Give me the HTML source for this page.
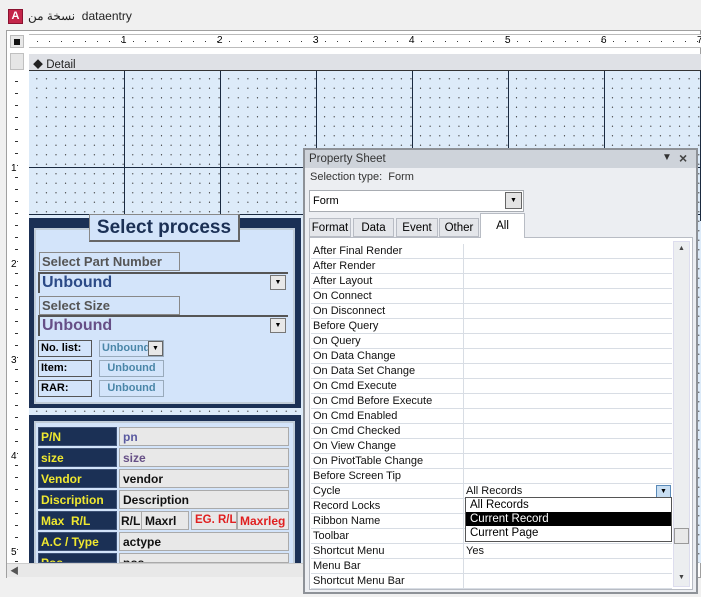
<!DOCTYPE html>
<html><head><meta charset="utf-8"><style>
*{margin:0;padding:0;box-sizing:border-box}
body{width:701px;height:597px;overflow:hidden;background:#f0f0f0;font-family:"Liberation Sans","Noto Sans CJK SC",sans-serif;position:relative;font-size:11px}
.a{position:absolute}
.grid{background-color:#ddebf9;background-image:radial-gradient(circle,#444 0.5px,transparent 0.8px);background-size:9.6px 9.5px;background-position:3px 3px}
.vl{position:absolute;top:71px;height:150px;width:1px;background:#1a2a40}
.lbl{position:absolute;left:38px;width:79px;height:19px;background:#1b3055;color:#f0e830;font-weight:bold;font-size:12px;padding:2px 2px;border:1px solid #3d5175;white-space:nowrap}
.val{position:absolute;left:119px;width:170px;height:19px;background:#e8e8e8;border:1px solid #aaa;font-weight:bold;font-size:12px;padding:2px 3px;color:#111;white-space:nowrap;overflow:hidden}
.row{position:absolute;left:311px;width:361px;height:15px;border-bottom:1px solid #d8dde4;font-size:11px;color:#111;background:#fff}
.row span{position:absolute;left:2px;top:1px}
.row i{position:absolute;left:152px;top:0;width:1px;height:15px;background:#d8dde4}
.row b{position:absolute;left:155px;top:1px;font-weight:normal}
.tab{position:absolute;top:218px;height:19px;background:#e4e6ea;border:1px solid #b8bcc4;font-size:11.5px;text-align:center;padding-top:3px}
</style></head><body>
<div class="a" style="left:8px;top:9px;width:15px;height:15px;background:#c4264a;border:1px solid #8a1230;color:#fff;font-weight:bold;font-size:11px;text-align:center;line-height:13px">A</div>
<div class="a" style="left:28px;top:9px;font-size:12px;color:#222">نسخة من&nbsp; dataentry</div>
<div class="a" style="left:6px;top:30px;width:695px;height:548px;border:1px solid #a0a0a0;background:#fff"></div>
<div class="a" style="left:10px;top:35px;width:14px;height:13px;background:#e8e8e8;border:1px solid #bbb"><div class="a" style="left:3px;top:3px;width:6px;height:6px;background:#111"></div></div>
<div class="a" style="left:29px;top:34px;width:672px;height:14px;background:#fff;border-top:1px solid #bbb;border-bottom:1px solid #bbb;font-size:10px">
<span class="a" style="left:92px;top:0">1</span><span class="a" style="left:188px;top:0">2</span><span class="a" style="left:284px;top:0">3</span><span class="a" style="left:380px;top:0">4</span><span class="a" style="left:476px;top:0">5</span><span class="a" style="left:572px;top:0">6</span><span class="a" style="left:668px;top:0">7</span>
<div class="a" style="left:0;top:6px;width:672px;height:1px;background-image:linear-gradient(90deg,#333 1px,transparent 1px);background-size:12px 1px;background-position:8px 0"></div>
</div>
<div class="a" style="left:10px;top:53px;width:14px;height:17px;background:#e6e6e6;border:1px solid #c0c0c0"></div>
<div class="a" style="left:10px;top:71px;width:14px;height:492px;background:#fff;font-size:10px">
<div class="a" style="left:5px;top:0;width:3px;height:492px;background-image:linear-gradient(#333 1px,transparent 1px);background-size:3px 12px;background-position:0 10px"></div>
<span class="a" style="left:1px;top:92px;background:#fff">1</span><span class="a" style="left:1px;top:188px;background:#fff">2</span><span class="a" style="left:1px;top:284px;background:#fff">3</span><span class="a" style="left:1px;top:380px;background:#fff">4</span><span class="a" style="left:1px;top:476px;background:#fff">5</span>
</div>
<div class="a" style="left:29px;top:54px;width:672px;height:17px;background:#dfe1e6;border-bottom:1px solid #333;font-size:11.5px;padding:2px 0 0 4px;color:#222"><span style="font-size:10px">◆</span> Detail</div>
<div class="a grid" style="left:29px;top:71px;width:672px;height:492px"></div>
<div class="vl" style="left:124px"></div><div class="vl" style="left:220px"></div><div class="vl" style="left:316px"></div><div class="vl" style="left:412px"></div><div class="vl" style="left:508px"></div><div class="vl" style="left:604px"></div><div class="vl" style="left:700px"></div>
<div class="a" style="left:29px;top:167px;width:672px;height:1px;background:#1a2a40"></div>
<div class="a" style="left:29px;top:214px;width:672px;height:1px;background:#1a2a40"></div>
<div class="a" style="left:29px;top:218px;width:272px;height:190px;background:#1b3055"></div>
<div class="a" style="left:34px;top:228px;width:261px;height:176px;background:#d3e4fa;border:2px solid #c0ccd8"></div>
<div class="a" style="left:89px;top:214px;width:151px;height:28px;background:#d3e4fa;border:1px solid #888;border-right:2px solid #666;border-bottom:2px solid #666;color:#1b3055;font-weight:bold;font-size:19px;text-align:center;padding-top:2px">Select process</div>
<div class="a" style="left:39px;top:252px;width:141px;height:19px;border:1px solid #888;color:#555;font-weight:bold;font-size:13px;padding:1px 2px">Select Part Number</div>
<div class="a" style="left:38px;top:272px;width:250px;height:21px;border-top:2px solid #555;border-left:2px solid #555;background:#d3e4fa;color:#2c4a86;font-weight:bold;font-size:16px;padding-left:2px">Unbound</div>
<div class="a" style="left:270px;top:275px;width:16px;height:15px;background:#e8e8e8;border:1px solid #777;font-size:7px;text-align:center;line-height:14px">▼</div>
<div class="a" style="left:39px;top:296px;width:141px;height:19px;border:1px solid #888;color:#555;font-weight:bold;font-size:13px;padding:1px 2px">Select Size</div>
<div class="a" style="left:38px;top:315px;width:250px;height:21px;border-top:2px solid #555;border-left:2px solid #555;background:#d3e4fa;color:#664f86;font-weight:bold;font-size:16px;padding-left:2px">Unbound</div>
<div class="a" style="left:270px;top:318px;width:16px;height:15px;background:#e8e8e8;border:1px solid #777;font-size:7px;text-align:center;line-height:14px">▼</div>
<div class="a" style="left:38px;top:340px;width:54px;height:17px;border:1px solid #555;font-weight:bold;font-size:11px;padding:1px 2px">No. list:</div>
<div class="a" style="left:38px;top:360px;width:54px;height:17px;border:1px solid #555;font-weight:bold;font-size:11px;padding:1px 2px">Item:</div>
<div class="a" style="left:38px;top:380px;width:54px;height:17px;border:1px solid #555;font-weight:bold;font-size:11px;padding:1px 2px">RAR:</div>
<div class="a" style="left:99px;top:340px;width:65px;height:17px;border:1px solid #9ab;color:#4a86a8;font-weight:bold;font-size:11px;padding:1px 2px;overflow:hidden">Unbound</div>
<div class="a" style="left:148px;top:341px;width:15px;height:15px;background:#e8e8e8;border:1px solid #666;font-size:7px;text-align:center;line-height:14px">▼</div>
<div class="a" style="left:99px;top:360px;width:65px;height:17px;border:1px solid #9ab;color:#4a86a8;font-weight:bold;font-size:11px;text-align:center;padding-top:1px">Unbound</div>
<div class="a" style="left:99px;top:380px;width:65px;height:17px;border:1px solid #9ab;color:#4a86a8;font-weight:bold;font-size:11px;text-align:center;padding-top:1px">Unbound</div>
<div class="a" style="left:29px;top:415px;width:272px;height:148px;background:#1b3055"></div>
<div class="a" style="left:34px;top:421px;width:261px;height:142px;background:#d3e4fa;border:2px solid #c0ccd8;border-bottom:none"></div>
<div class="lbl" style="top:427px">P/N</div><div class="val" style="top:427px;color:#5a5aa0">pn</div>
<div class="lbl" style="top:448px">size</div><div class="val" style="top:448px;color:#664f86">size</div>
<div class="lbl" style="top:469px">Vendor</div><div class="val" style="top:469px">vendor</div>
<div class="lbl" style="top:490px">Discription</div><div class="val" style="top:490px">Description</div>
<div class="lbl" style="top:511px">Max&nbsp; R/L</div>
<div class="val" style="top:511px;width:23px;padding:2px 1px">R/L</div>
<div class="val" style="top:511px;left:141px;width:48px">Maxrl</div>
<div class="val" style="top:511px;left:191px;width:46px;color:#e02020;font-size:11.5px">EG. R/L</div>
<div class="val" style="top:511px;left:237px;width:52px;color:#e02020;padding:2px 2px">Maxrleg</div>
<div class="lbl" style="top:532px">A.C / Type</div><div class="val" style="top:532px">actype</div>
<div class="lbl" style="top:553px;height:10px;overflow:hidden">Pos</div><div class="val" style="top:553px;height:10px;overflow:hidden">pos</div>
<div class="a" style="left:7px;top:563px;width:296px;height:14px;background:#e8e8e8;border-top:1px solid #ccc"></div>
<div class="a" style="left:10px;top:564px;font-size:9px;color:#555">◀</div>
<div class="a" style="left:7px;top:577px;width:296px;height:20px;background:#f0f0f0"></div>
<div class="a" style="left:303px;top:148px;width:395px;height:446px;background:#eceef2;border:2px solid #8e9298"></div>
<div class="a" style="left:305px;top:150px;width:391px;height:18px;background:#ced3da"></div>
<div class="a" style="left:309px;top:153px;font-size:11.5px;color:#333">Property Sheet</div>
<div class="a" style="left:662px;top:152px;font-size:10px;color:#333">▼</div>
<div class="a" style="left:679px;top:150px;font-size:14px;color:#444;font-weight:bold">×</div>
<div class="a" style="left:310px;top:171px;font-size:11px;color:#333">Selection type:&nbsp; Form</div>
<div class="a" style="left:309px;top:190px;width:215px;height:22px;background:#fff;border:1px solid #a8acb2;font-size:11px;padding:4px 3px">Form</div>
<div class="a" style="left:505px;top:192px;width:17px;height:17px;background:#e4e4e4;border:1px solid #666;font-size:7px;text-align:center;line-height:16px">▼</div>
<div class="tab" style="left:309px;width:42px">Format</div>
<div class="tab" style="left:353px;width:41px">Data</div>
<div class="tab" style="left:396px;width:42px">Event</div>
<div class="tab" style="left:439px;width:40px">Other</div>
<div class="a" style="left:480px;top:213px;width:45px;height:25px;background:#fff;border:1px solid #b8bcc4;border-bottom:none;font-size:11.5px;text-align:center;padding-top:6px;z-index:2">All</div>
<div class="a" style="left:309px;top:237px;width:384px;height:353px;background:#fff;border:1px solid #b8bcc4"></div>
<div class="a" style="left:673px;top:241px;width:17px;height:346px;background:#eceef0;border:1px solid #dde"></div>
<div class="a" style="left:678px;top:245px;font-size:7px;color:#444">▲</div>
<div class="a" style="left:678px;top:574px;font-size:7px;color:#444">▼</div>
<div class="a" style="left:674px;top:528px;width:15px;height:16px;background:#e8e8e8;border:1px solid #999"></div>
<div class="row" style="top:244px"><span>After Final Render</span><i></i></div>
<div class="row" style="top:259px"><span>After Render</span><i></i></div>
<div class="row" style="top:274px"><span>After Layout</span><i></i></div>
<div class="row" style="top:289px"><span>On Connect</span><i></i></div>
<div class="row" style="top:304px"><span>On Disconnect</span><i></i></div>
<div class="row" style="top:319px"><span>Before Query</span><i></i></div>
<div class="row" style="top:334px"><span>On Query</span><i></i></div>
<div class="row" style="top:349px"><span>On Data Change</span><i></i></div>
<div class="row" style="top:364px"><span>On Data Set Change</span><i></i></div>
<div class="row" style="top:379px"><span>On Cmd Execute</span><i></i></div>
<div class="row" style="top:394px"><span>On Cmd Before Execute</span><i></i></div>
<div class="row" style="top:409px"><span>On Cmd Enabled</span><i></i></div>
<div class="row" style="top:424px"><span>On Cmd Checked</span><i></i></div>
<div class="row" style="top:439px"><span>On View Change</span><i></i></div>
<div class="row" style="top:454px"><span>On PivotTable Change</span><i></i></div>
<div class="row" style="top:469px"><span>Before Screen Tip</span><i></i></div>
<div class="row" style="top:484px"><span>Cycle</span><i></i><b>All Records</b></div>
<div class="row" style="top:499px"><span>Record Locks</span><i></i></div>
<div class="row" style="top:514px"><span>Ribbon Name</span><i></i></div>
<div class="row" style="top:529px"><span>Toolbar</span><i></i></div>
<div class="row" style="top:544px"><span>Shortcut Menu</span><i></i><b>Yes</b></div>
<div class="row" style="top:559px"><span>Menu Bar</span><i></i></div>
<div class="row" style="top:574px"><span>Shortcut Menu Bar</span><i></i></div>
<div class="a" style="left:656px;top:485px;width:15px;height:13px;background:#c8def2;border:1px solid #5a8ab8;font-size:7px;text-align:center;line-height:12px">▼</div>
<div class="a" style="left:465px;top:497px;width:207px;height:45px;background:#fff;border:1px solid #555;font-size:11.5px;line-height:14px">
<div style="height:14px;padding-left:4px">All Records</div>
<div style="height:14px;padding-left:4px;background:#000;color:#fff">Current Record</div>
<div style="height:14px;padding-left:4px">Current Page</div>
</div>
</body></html>
